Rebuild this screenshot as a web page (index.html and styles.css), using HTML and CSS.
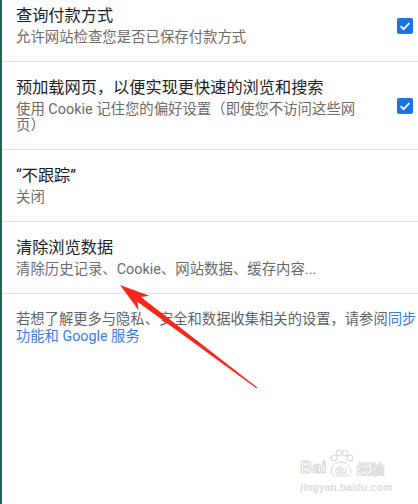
FILE: index.html
```html
<!DOCTYPE html>
<html lang="zh-CN">
<head>
  <meta charset="UTF-8" />
  <meta name="viewport" content="width=device-width, initial-scale=1.0"/>
  <title>隐私设置</title>
  <link rel="stylesheet" href="styles.css">
</head>
<body>
  <div class="screen">
    <div class="list">
      <div class="row">
        <div class="text">
          <div class="title">查询付款方式</div>
          <div class="sub">允许网站检查您是否已保存付款方式</div>
        </div>
        <span class="check">
          <svg viewBox="0 0 16 16" width="16" height="16"><path d="M3.6 8.2l3 3 5.8-6" fill="none" stroke="#fff" stroke-width="1.8"/></svg>
        </span>
      </div>
      <div class="row">
        <div class="text">
          <div class="title">预加载网页，以便实现更快速的浏览和搜索</div>
          <div class="sub">使用 Cookie 记住您的偏好设置（即使您不访问这些网页）</div>
        </div>
        <span class="check">
          <svg viewBox="0 0 16 16" width="16" height="16"><path d="M3.6 8.2l3 3 5.8-6" fill="none" stroke="#fff" stroke-width="1.8"/></svg>
        </span>
      </div>
      <div class="row">
        <div class="text">
          <div class="title">“不跟踪”</div>
          <div class="sub">关闭</div>
        </div>
      </div>
      <div class="row">
        <div class="text">
          <div class="title">清除浏览数据</div>
          <div class="sub">清除历史记录、Cookie、网站数据、缓存内容...</div>
        </div>
      </div>
    </div>

    <p class="footer">若想了解更多与隐私、安全和数据收集相关的设置，请参阅<a href="#">同步功能和 Google 服务</a></p>

    <!-- annotation arrow drawn over the page -->
    <svg class="arrow" viewBox="0 0 418 504" width="418" height="504">
      <polygon fill="#f7271c" points="120,285 149.4,295.8 141,297 257.3,387.6 256.7,388.4 137.4,301.8 138.6,310.2"/>
    </svg>

    <div class="watermark">
      <div class="wm-logo">
        <span class="wm-bai">Bai</span>
        <svg class="wm-paw" viewBox="0 0 30 30" width="30" height="30">
          <g fill="none" stroke="#d6d6d6" stroke-width="1">
            <circle cx="8" cy="10" r="3"/><circle cx="13" cy="5" r="3"/><circle cx="19" cy="5" r="3"/><circle cx="24" cy="10" r="3"/>
            <path d="M5 24c0-6 5-10 10-10s10 4 10 10c0 4-5 4-10 4s-10 0-10-4z"/>
          </g>
          <text x="15" y="26" text-anchor="middle" font-family="Liberation Sans" font-weight="bold" font-size="10" fill="#fff" stroke="#d6d6d6" stroke-width="0.6">du</text>
        </svg>
        <span class="wm-cn">经验</span>
      </div>
      <div class="wm-url">jingyan.baidu.com</div>
    </div>
  </div>
</body>
</html>
```

FILE: styles.css
```css
html, body { margin: 0; padding: 0; background: #fff; }
body { font-family: Roboto, "Noto Sans CJK SC", sans-serif; overflow: hidden; }

.screen { position: relative; width: 418px; height: 504px; border-left: 2px solid #2b5f56; box-sizing: border-box; overflow: hidden; }

.list { margin-top: -10px; }
.row { display: flex; align-items: center; padding: 15px 5px 15px 14px; border-bottom: 1px solid #e2e2e2; }
.text { flex: 1; padding-right: 36px; }
.title { font-size: 16.2px; line-height: 22px; color: #202124; }
.sub { font-size: 14.4px; line-height: 16px; color: #6b6b6b; margin-top: 3px; }

.check { width: 16px; height: 16px; border-radius: 2px; background: #1a73e8; display: flex; }

.footer { margin: 0; padding: 17px 0 0 14px; font-size: 14.3px; line-height: 16.5px; color: #5f6368; }
.footer a { color: #3b7ce6; text-decoration: none; }

.arrow { position: absolute; left: -2px; top: 0; pointer-events: none; }

.watermark { position: absolute; left: 298px; top: 448px; width: 92px; color: #fff; }
.wm-logo { display: flex; align-items: flex-end; height: 30px; }
.wm-bai { font-family: "Liberation Sans", sans-serif; font-weight: bold; font-size: 17px; line-height: 18px; -webkit-text-stroke: 1px #d6d6d6; margin-bottom: 1px; }
.wm-paw { display: block; }
.wm-cn { font-family: "Noto Sans CJK SC", sans-serif; font-weight: bold; font-size: 14px; line-height: 18px; -webkit-text-stroke: 0.8px #d6d6d6; margin-bottom: 1px; }
.wm-url { font-family: "Liberation Sans", sans-serif; font-weight: bold; font-size: 10.5px; line-height: 12px; color: #dcdcdc; margin-top: 3px; }
```
